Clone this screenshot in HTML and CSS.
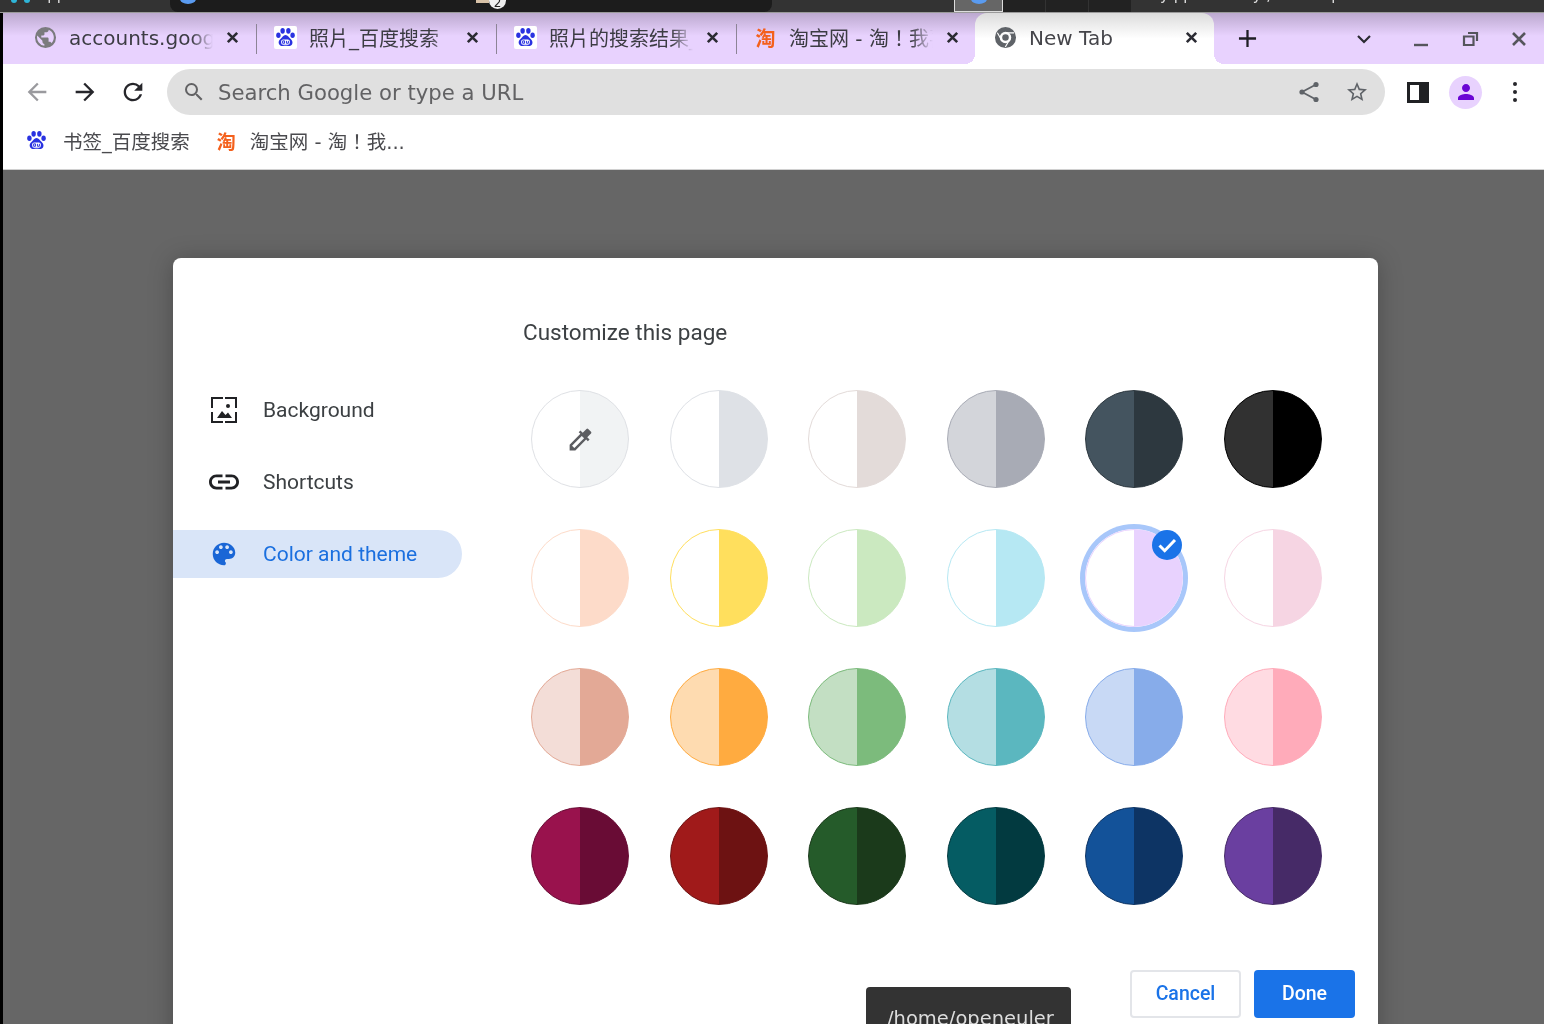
FILE: index.html
```html
<!DOCTYPE html>
<html lang="en">
<head>
  <meta charset="UTF-8" />
  <title>New Tab</title>
  <link rel="stylesheet" href="styles.css">
</head>
<body>
  <!-- shared icons -->
  <svg class="defs" width="0" height="0">
    <symbol id="baidu" viewBox="0 0 24 24">
      <rect width="24" height="24" rx="2" fill="#fff"/>
      <ellipse cx="4.6" cy="9.6" rx="2.3" ry="2.9" fill="#2932e1"/>
      <ellipse cx="9" cy="5" rx="2.3" ry="3" fill="#2932e1"/>
      <ellipse cx="15" cy="5" rx="2.3" ry="3" fill="#2932e1"/>
      <ellipse cx="19.4" cy="9.6" rx="2.3" ry="2.9" fill="#2932e1"/>
      <path d="M12 9.5c-2.4 0-3.4 2.6-5.2 4-1.8 1.500-2.300 3.200-1.700 4.900.7 2 2.600 2.600 4.300 2.400 1.700-.2 3.400-.4 5.200 0 1.800.3 3.600-.2 4.400-2.100.7-1.800.2-3.700-1.600-5.200-1.900-1.500-2.800-4-5.400-4z" fill="#2932e1"/>
      <rect x="7.500" y="14" width="9" height="5.500" rx="2" fill="#fff"/>
      <path d="M9 15.500h2v2.500H9zM13 15.500v2.500h2v-2.500" fill="none" stroke="#2932e1" stroke-width="1"/>
    </symbol>
    <symbol id="close" viewBox="0 0 16 16">
      <path d="M3 3l10 10M13 3L3 13" fill="none" stroke="currentColor" stroke-width="2.800"/>
    </symbol>
  </svg>

  <div class="osbar">
    <div class="os-left"><i class="os-dot"></i><i class="os-dot"></i><span class="os-text">Apps</span></div>
    <div class="os-pill"><i class="os-blue"></i><span class="os-badge">2</span></div>
    <div class="os-gap"></div>
    <div class="os-thumb"><i class="os-blue"></i></div>
    <div class="os-slot"></div>
    <div class="os-slot"></div>
    <div class="os-slot"></div>
    <div class="os-right">
      <span class="os-text">y pp</span>
      <span class="os-text">y ,</span>
      <span class="os-text">p</span>
    </div>
  </div>

  <div class="window">
    <div class="tabstrip">
      <div class="tab">
        <svg class="favicon" viewBox="0 0 24 24"><path fill="#7b7b7e" d="M12 1a11 11 0 1 0 0 22 11 11 0 0 0 0-22zM10.800 20.700A8.800 8.800 0 0 1 3.400 10l5.400 5.400v1.100c0 1.200 1 2.200 2 2.200v2zm7.500-2.800c-.3-.9-1.100-1.500-2-1.500h-1.100v-3.300c0-.6-.5-1.100-1.100-1.100H7.600V9.800h2.200c.6 0 1.100-.5 1.100-1.100V6.500h2.200c1.200 0 2.200-1 2.200-2.200v-.5a8.800 8.800 0 0 1 3 14.100z"/></svg>
        <span class="tab-title">accounts.google.com</span>
        <svg class="tab-close"><use href="#close"/></svg>
      </div>
      <div class="tab">
        <svg class="favicon"><use href="#baidu"/></svg>
        <span class="tab-title">照片_百度搜索</span>
        <svg class="tab-close"><use href="#close"/></svg>
      </div>
      <div class="tab">
        <svg class="favicon"><use href="#baidu"/></svg>
        <span class="tab-title">照片的搜索结果_百度图片</span>
        <svg class="tab-close"><use href="#close"/></svg>
      </div>
      <div class="tab tab-last">
        <span class="tao">淘</span>
        <span class="tab-title">淘宝网 - 淘！我喜欢</span>
        <svg class="tab-close"><use href="#close"/></svg>
      </div>
      <div class="tab tab-active">
        <svg class="favicon" viewBox="0 0 24 24">
          <circle cx="12" cy="12" r="8.500" fill="none" stroke="#5f6368" stroke-width="5"/>
          <circle cx="12" cy="12" r="3.400" fill="#5f6368"/>
          <path d="M12 7.200h9M7.800 14.400L3.500 7M16.200 14.400L11.800 22" stroke="#fff" stroke-width="1.200" fill="none"/>
        </svg>
        <span class="tab-title">New Tab</span>
        <svg class="tab-close"><use href="#close"/></svg>
      </div>
      <svg class="newtab" viewBox="0 0 20 20"><path d="M10 1v18M1 10h18" stroke="#1f1f24" stroke-width="2.400"/></svg>
      <div class="winbtns">
        <svg class="winbtn winbtn-menu" viewBox="0 0 20 20"><path d="M4 7l6 6 6-6" fill="none" stroke="#2b2b33" stroke-width="2.200"/></svg>
        <svg class="winbtn" viewBox="0 0 20 20"><path d="M3 16h14" stroke="#55555c" stroke-width="2.400"/></svg>
        <svg class="winbtn" viewBox="0 0 20 20"><path d="M8 4h9v8M4 7.500h9.500V16H4z" fill="none" stroke="#55555c" stroke-width="2.200"/></svg>
        <svg class="winbtn" viewBox="0 0 20 20"><path d="M4 4l12 12M16 4L4 16" stroke="#55555c" stroke-width="2.600"/></svg>
      </div>
    </div>

    <div class="toolbar">
      <svg class="navicon dim" viewBox="0 0 24 24"><path d="M20 11H7.830l5.590-5.590L12 4l-8 8 8 8 1.410-1.410L7.830 13H20v-2z"/></svg>
      <svg class="navicon" viewBox="0 0 24 24"><path d="M12 4l-1.410 1.410L16.170 11H4v2h12.170l-5.580 5.590L12 20l8-8z"/></svg>
      <svg class="navicon" viewBox="0 0 24 24"><path d="M17.650 6.350A7.958 7.958 0 0 0 12 4c-4.420 0-7.990 3.580-7.990 8s3.570 8 7.990 8c3.730 0 6.840-2.550 7.730-6h-2.080A5.990 5.990 0 0 1 12 18c-3.310 0-6-2.690-6-6s2.690-6 6-6c1.660 0 3.140.69 4.220 1.780L13 11h7V4l-2.350 2.350z"/></svg>
      <div class="omnibox">
        <svg class="omni-search" viewBox="0 0 24 24"><path d="M15.500 14h-.79l-.28-.27A6.471 6.471 0 0 0 16 9.500 6.500 6.500 0 1 0 9.500 16c1.610 0 3.090-.59 4.230-1.570l.27.28v.79l5 4.990L20.490 19l-4.990-5zm-6 0C7.010 14 5 11.990 5 9.500S7.010 5 9.500 5 14 7.010 14 9.500 11.990 14 9.500 14z"/></svg>
        <span class="omni-text">Search Google or type a URL</span>
        <svg class="omni-icon" viewBox="0 0 24 24"><path d="M19 4.500L5 12l14 7.500" fill="none" stroke="#5f6368" stroke-width="1.800"/><circle cx="19" cy="4.500" r="2.600"/><circle cx="5" cy="12" r="2.600"/><circle cx="19" cy="19.500" r="2.600"/></svg>
        <svg class="omni-icon" viewBox="0 0 24 24"><path d="M22 9.240l-7.190-.62L12 2 9.190 8.630 2 9.240l5.460 4.730L5.820 21 12 17.270 18.180 21l-1.630-7.030L22 9.240zM12 15.400l-3.760 2.270 1-4.280-3.320-2.880 4.380-.38L12 6.100l1.710 4.040 4.380.38-3.320 2.880 1 4.280L12 15.400z"/></svg>
      </div>
      <div class="panelicon"></div>
      <div class="avatar">
        <svg viewBox="0 0 24 24"><path d="M12 12c2.210 0 4-1.790 4-4s-1.790-4-4-4-4 1.790-4 4 1.790 4 4 4zm0 2c-2.670 0-8 1.340-8 4v2h16v-2c0-2.660-5.330-4-8-4z"/></svg>
      </div>
      <div class="kebab"><i></i><i></i><i></i></div>
    </div>

    <div class="bookmarks">
      <div class="bookmark">
        <svg class="favicon"><use href="#baidu"/></svg>
        <span>书签_百度搜索</span>
      </div>
      <div class="bookmark">
        <span class="tao">淘</span>
        <span>淘宝网 - 淘！我...</span>
      </div>
    </div>

    <div class="content">
      <div class="dialog">
        <div class="dialog-body">
          <ul class="sidebar">
            <li class="side-item">
              <svg class="side-icon" viewBox="-2 -2 30 30"><path d="M1 11V1h11M14 1h11v10M25 15v10H14M12 25H1V15" fill="none" stroke="#202124" stroke-width="2"/><circle cx="17" cy="9" r="2" fill="#202124"/><path d="M6 21l5-7 3.500 4 2.500-2.500 4 5.500z" fill="#202124"/></svg>
              <span>Background</span>
            </li>
            <li class="side-item">
              <svg class="side-icon" viewBox="2 2 20 20"><path fill="#202124" d="M3.900 12c0-1.710 1.390-3.100 3.100-3.100h4V7H7c-2.760 0-5 2.240-5 5s2.240 5 5 5h4v-1.900H7c-1.710 0-3.100-1.390-3.100-3.100zM8 13h8v-2H8v2zm9-6h-4v1.900h4c1.710 0 3.100 1.390 3.100 3.100s-1.390 3.100-3.100 3.100h-4V17h4c2.760 0 5-2.240 5-5s-2.240-5-5-5z"/></svg>
              <span>Shortcuts</span>
            </li>
            <li class="side-item side-active">
              <svg class="side-icon" viewBox="0 0 24 24"><path fill="#1a66d6" d="M12 3c-4.970 0-9 4.030-9 9s4.030 9 9 9c.83 0 1.500-.67 1.500-1.500 0-.39-.15-.74-.39-1.010-.23-.26-.38-.61-.38-.99 0-.83.67-1.500 1.500-1.500H16c2.760 0 5-2.240 5-5 0-4.420-4.030-8-9-8zm-5.500 9c-.83 0-1.500-.67-1.500-1.500S5.670 9 6.500 9 8 9.670 8 10.500 7.330 12 6.500 12zm3-4C8.670 8 8 7.330 8 6.500S8.670 5 9.500 5s1.500.67 1.500 1.500S10.330 8 9.500 8zm5 0c-.83 0-1.500-.67-1.500-1.500S13.670 5 14.500 5s1.500.67 1.500 1.500S15.330 8 14.500 8zm3 4c-.83 0-1.500-.67-1.500-1.500S16.670 9 17.500 9s1.500.67 1.500 1.500-.67 1.500-1.500 1.500z"/></svg>
              <span>Color and theme</span>
            </li>
          </ul>

          <div class="main">
            <h2 class="main-title">Customize this page</h2>
            <div class="swatches">
              <div class="swatch s-custom">
                <svg class="dropper" viewBox="0 0 24 24"><path d="M20.710 5.630l-2.340-2.340a1 1 0 0 0-1.410 0l-3.120 3.120-1.930-1.910-1.410 1.410 1.420 1.420L3 16.250V21h4.750l8.920-8.920 1.420 1.420 1.410-1.410-1.920-1.920 3.120-3.120c.4-.4.4-1.030.01-1.420zM6.920 19L5 17.080l8.060-8.060 1.920 1.920L6.920 19z"/></svg>
              </div>
              <div class="swatch s-cool"></div>
              <div class="swatch s-warm"></div>
              <div class="swatch s-grey"></div>
              <div class="swatch s-slate"></div>
              <div class="swatch s-black"></div>

              <div class="swatch s-peach"></div>
              <div class="swatch s-yellow"></div>
              <div class="swatch s-mint"></div>
              <div class="swatch s-sky"></div>
              <div class="swatch s-lilac selected">
                <svg class="check" viewBox="0 0 30 30"><circle cx="15" cy="15" r="15" fill="#1a73e8"/><path d="M7.500 15.500l5.200 5.200L23 10" fill="none" stroke="#fff" stroke-width="3"/></svg>
              </div>
              <div class="swatch s-blush"></div>

              <div class="swatch s-clay"></div>
              <div class="swatch s-orange"></div>
              <div class="swatch s-green"></div>
              <div class="swatch s-teal"></div>
              <div class="swatch s-blue"></div>
              <div class="swatch s-pink"></div>

              <div class="swatch s-wine"></div>
              <div class="swatch s-red"></div>
              <div class="swatch s-forest"></div>
              <div class="swatch s-deep"></div>
              <div class="swatch s-navy"></div>
              <div class="swatch s-violet"></div>
            </div>
          </div>
        </div>

        <div class="dialog-foot">
          <button class="btn btn-cancel">Cancel</button>
          <button class="btn btn-done">Done</button>
        </div>
      </div>
      <div class="tooltip">/home/openeuler</div>
    </div>
  </div>
</body>
</html>
```

FILE: styles.css
```css
* { box-sizing: border-box; }
html, body { margin: 0; height: 100%; overflow: hidden; }
body { height: 1024px; background: #fff; font-family: "DejaVu Sans", "Noto Sans CJK TC", sans-serif; display: flex; flex-direction: column; filter: blur(0.6px); }
.defs { position: absolute; }

/* desktop panel behind the browser */
.osbar { height: 13px; flex: none; display: flex; background: #333; border-bottom: 1px solid #9a9a9a; overflow: hidden; }
.os-left { width: 170px; display: flex; gap: 7px; padding-left: 11px; }
.os-dot { width: 6px; height: 3px; background: #2fb5d8; border-radius: 0 0 3px 3px; }
.os-text { color: #ddd; font-size: 15px; line-height: 15px; margin-top: -12px; white-space: nowrap; }
.os-pill { width: 602px; background: #1c1c1c; border-radius: 0 0 8px 8px; position: relative; padding-left: 10px; }
.os-blue { display: block; width: 16px; height: 10px; margin-top: -6px; background: #5a9bf0; border-radius: 50%; }
.os-badge { position: absolute; left: 319px; top: -8px; width: 17px; height: 17px; border-radius: 50%; background: #eee; color: #222; font-size: 12px; line-height: 22px; text-align: center; }
.os-badge::before { content: ""; position: absolute; left: -13px; top: 8px; width: 13px; height: 3px; background: #d8c2a8; }
.os-gap { width: 182px; }
.os-thumb { width: 49px; background: #666; border: 1px solid #ddd; border-top: 0; padding-left: 16px; }
.os-slot { width: 43px; background: #222; border-right: 1px solid #333; }
.os-right { flex: 1; display: flex; gap: 60px; padding-left: 28px; }

.window { flex: 1; min-height: 0; display: flex; flex-direction: column; border-left: 3px solid #000; }

/* tabs */
.tabstrip { height: 51px; flex: none; display: flex; align-items: center; padding-left: 12px; background: linear-gradient(#bca9cf, #e8d2fe 45%); }
.tab { width: 240px; height: 100%; display: flex; align-items: center; padding: 0 15px 2px 19px; position: relative; color: #3c3c43; }
.tab::after { content: ""; position: absolute; right: -2px; top: 11px; height: 30px; width: 1px; background: #8d8496; }
.tab-last::after { display: none; }
.tab-active { width: 239px; background: linear-gradient(#dcdcdc, #fff 50%); border-radius: 12px 12px 0 0; color: #45454a; }
.tab-active::before, .tab-active::after { content: ""; position: absolute; bottom: 0; top: auto; width: 10px; height: 10px; background: radial-gradient(circle at 0 0, transparent 10px, #fff 10px); }
.tab-active::before { left: -10px; }
.tab-active::after { left: 239px; right: auto; background: radial-gradient(circle at 100% 0, transparent 10px, #fff 10px); }
.favicon { width: 23px; height: 23px; flex: none; }
.tao { width: 23px; flex: none; padding-top: 3px; color: #f4601c; font-size: 20px; font-weight: 700; line-height: 23px; text-align: center; }
.tab-title { flex: 1; min-width: 0; margin: 0 12px; font-size: 20px; white-space: nowrap; overflow: hidden; -webkit-mask-image: linear-gradient(90deg, #000 85%, transparent); mask-image: linear-gradient(90deg, #000 85%, transparent); }
.tab-active .tab-title { -webkit-mask-image: none; mask-image: none; }
.tab-close { width: 15px; height: 15px; flex: none; color: #2b2b33; }
.newtab { width: 19px; height: 19px; margin-left: 24px; }
.winbtns { display: flex; margin-left: 97px; gap: 29px; }
.winbtn { width: 20px; height: 20px; }
.winbtn-menu { margin-right: 8px; }

/* toolbar */
.toolbar { height: 54px; flex: none; display: flex; align-items: center; background: #fff; padding: 2px 0 0 20px; }
.navicon { width: 28px; height: 28px; margin-right: 20px; fill: #26262b; flex: none; }
.navicon.dim { fill: #9a9a9e; }
.omnibox { width: 1218px; height: 46px; flex: none; display: flex; align-items: center; padding: 0 16px 0 15px; background: #e0e0e0; border-radius: 23px; }
.omni-search { width: 24px; height: 24px; fill: #626264; flex: none; }
.omni-text { flex: 1; margin: 1px 0 0 12px; font-size: 21.2px; color: #626264; white-space: nowrap; }
.omni-icon { width: 24px; height: 24px; fill: #5f6368; flex: none; margin-left: 24px; }
.panelicon { width: 22px; height: 21px; margin-left: 22px; flex: none; background: linear-gradient(90deg, #fff 55%, #202124 55%); border: 3px solid #202124; }
.avatar { width: 33px; height: 33px; margin-left: 20px; flex: none; border-radius: 50%; background: #e8d2fe; display: flex; align-items: center; justify-content: center; }
.avatar svg { width: 24px; height: 24px; fill: #6a06d4; }
.kebab { margin-left: 31px; display: flex; flex-direction: column; gap: 4px; }
.kebab i { width: 4px; height: 4px; background: #26262b; border-radius: 50%; }

/* bookmarks */
.bookmarks { height: 52px; flex: none; display: flex; align-items: center; padding: 0 0 6px 22px; gap: 25px; background: #fff; border-bottom: 1px solid #d0d0d0; font-size: 19.5px; color: #4a4a4e; }
.bookmark { display: flex; align-items: center; gap: 15px; }
.bookmark .tao { font-size: 19px; margin-right: -3px; }

/* modal over the new tab page */
.content { flex: 1; min-height: 0; background: #666; padding: 88px 0 0 170px; position: relative; overflow: hidden; }
.dialog { width: 1205px; height: 900px; background: #fff; border-radius: 8px; box-shadow: 0 2px 24px rgba(0,0,0,.25); font-family: Roboto, sans-serif; }
.dialog-body { display: flex; height: 712px; padding-top: 61px; }
.sidebar { list-style: none; margin: 67px 61px 0 0; padding: 0; width: 289px; flex: none; display: flex; flex-direction: column; gap: 24px; }
.side-item { height: 48px; display: flex; align-items: center; gap: 24px; padding-left: 36px; border-radius: 0 24px 24px 0; font-size: 21px; color: #3c4043; }
.side-icon { width: 30px; height: 30px; flex: none; }
.side-active { background: #d9e5f8; color: #1a6fdf; }
.main-title { margin: 0 0 45px; font-size: 22.5px; font-weight: 400; color: #3c4043; line-height: 26px; }

.swatches { display: grid; grid-template-columns: repeat(6, 98px); justify-content: space-between; row-gap: 41px; width: 799px; padding-left: 8px; }
.swatch { width: 98px; height: 98px; border-radius: 50%; position: relative; border: 1px solid var(--b); background: linear-gradient(90deg, var(--a) 50%, var(--b) 50%); display: flex; align-items: center; justify-content: center; }
.selected { box-shadow: 0 0 0 5px #a8c7fa; }
.check { position: absolute; right: 0; top: 0; width: 30px; height: 30px; }
.dropper { width: 29px; height: 29px; fill: #5c5d61; }

.s-custom { --a: #fff; --b: #f1f3f4; border-color: #dfe1e5; }
.s-cool { --a: #fff; --b: #dee1e6; }
.s-warm { --a: #fff; --b: #e3dbd9; }
.s-grey { --a: #d3d5da; --b: #a8abb5; }
.s-slate { --a: #44545f; --b: #2d383f; }
.s-black { --a: #313131; --b: #000; }
.s-peach { --a: #fff; --b: #fddbc9; }
.s-yellow { --a: #fff; --b: #ffdf5d; }
.s-mint { --a: #fff; --b: #cbe9c0; }
.s-sky { --a: #fff; --b: #b6e8f3; }
.s-lilac { --a: #fff; --b: #e8d2fe; }
.s-blush { --a: #fff; --b: #f6d5e3; }
.s-clay { --a: #f3ddd7; --b: #e3a996; }
.s-orange { --a: #fedbb0; --b: #ffab40; }
.s-green { --a: #c3dfc3; --b: #7cbb7c; }
.s-teal { --a: #b4dee3; --b: #5bb7bf; }
.s-blue { --a: #c8d9f5; --b: #87acea; }
.s-pink { --a: #ffdbe2; --b: #ffabba; }
.s-wine { --a: #99124d; --b: #690c35; }
.s-red { --a: #a01a1a; --b: #6d1212; }
.s-forest { --a: #255b2a; --b: #1b3a1b; }
.s-deep { --a: #055c63; --b: #023a40; }
.s-navy { --a: #135299; --b: #0d3464; }
.s-violet { --a: #6a3fa0; --b: #462a67; }

.dialog-foot { display: flex; justify-content: flex-end; gap: 13px; padding-right: 23px; }
.btn { height: 48px; padding: 0 0 2px; border-radius: 4px; font-family: Roboto, sans-serif; font-size: 19.5px; font-weight: 500; }
.btn-cancel { width: 111px; background: #fff; color: #1a73e8; border: 2px solid #e3e5e9; }
.btn-done { width: 101px; background: #1a73e8; color: #fff; border: 0; }

.tooltip { position: absolute; left: 863px; top: 817px; width: 205px; height: 60px; padding: 20px 0 0 21px; background: #333; border-radius: 4px; color: #ddd; font-size: 19.5px; line-height: 24px; }
```
